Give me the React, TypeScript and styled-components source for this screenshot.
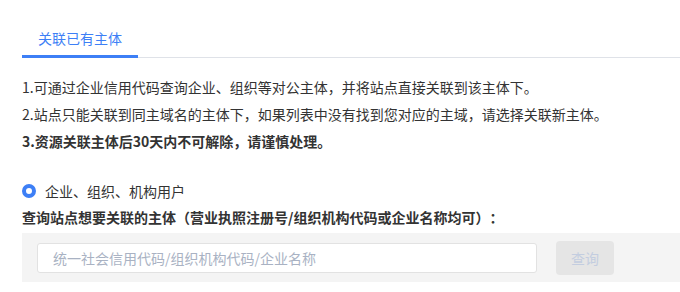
import React from "react";
import styled, { createGlobalStyle } from "styled-components";

const BLUE = "#3d7ff6";
const FONT = `"Noto Sans CJK SC", "Noto Sans", sans-serif`;

const NOTES = [
  { text: "1.可通过企业信用代码查询企业、组织等对公主体，并将站点直接关联到该主体下。" },
  { text: "2.站点只能关联到同主域名的主体下，如果列表中没有找到您对应的主域，请选择关联新主体。" },
  { text: "3.资源关联主体后30天内不可解除，请谨慎处理。", strong: true },
];

function App() {
  return (
    <>
      <GlobalStyle />
      <Page>
        <TabBar>
          <Tab $active>关联已有主体</Tab>
        </TabBar>

        <Notes>
          {NOTES.map((n) => (
            <Note key={n.text} $strong={n.strong}>
              {n.text}
            </Note>
          ))}
        </Notes>

        <RadioRow>
          <RadioDot />
          企业、组织、机构用户
        </RadioRow>

        <FieldLabel>
          查询站点想要关联的主体（营业执照注册号/组织机构代码或企业名称均可）：
        </FieldLabel>

        <SearchBox>
          <SearchInput placeholder="统一社会信用代码/组织机构代码/企业名称" />
          <SearchButton disabled>查询</SearchButton>
        </SearchBox>
      </Page>
    </>
  );
}

export default App;

const GlobalStyle = createGlobalStyle`
  html, body {
    margin: 0;
    padding: 0;
    background: #fff;
  }
  body {
    font-family: ${FONT};
    color: #333;
    text-spacing-trim: space-all;
  }
`;

const Page = styled.div`
  width: 680px;
  height: 292px;
  padding-left: 22px;
  box-sizing: border-box;
  overflow: hidden;
`;

const TabBar = styled.div`
  display: flex;
  padding-top: 28px;
  border-bottom: 1px solid #dfe2e8;
  margin-right: -40px;
`;

const Tab = styled.div<{ $active?: boolean }>`
  width: 116px;
  text-align: center;
  font-size: 14px;
  line-height: 20px;
  padding-bottom: 7px;
  margin-bottom: -1px;
  color: ${(p) => (p.$active ? BLUE : "#666")};
  border-bottom: 3px solid ${(p) => (p.$active ? BLUE : "transparent")};
`;

const Notes = styled.div`
  margin-top: 16px;
`;

const Note = styled.div<{ $strong?: boolean }>`
  font-size: 14px;
  line-height: 27px;
  white-space: nowrap;
  font-weight: ${(p) => (p.$strong ? 700 : 400)};
`;

const RadioRow = styled.label`
  display: flex;
  align-items: center;
  gap: 9px;
  margin-top: 26px;
  font-size: 14px;
  line-height: 20px;
`;

const RadioDot = styled.span`
  width: 14px;
  height: 14px;
  box-sizing: border-box;
  border-radius: 50%;
  border: 4px solid ${BLUE};
  background: #fff;
`;

const FieldLabel = styled.div`
  margin-top: 6px;
  font-size: 14px;
  line-height: 20px;
  font-weight: 700;
  white-space: nowrap;
`;

const SearchBox = styled.div`
  display: flex;
  align-items: center;
  gap: 19px;
  margin-top: 6px;
  margin-right: -40px;
  height: 49px;
  padding-left: 15px;
  background: #f4f4f4;
`;

const SearchInput = styled.input`
  width: 500px;
  height: 30px;
  box-sizing: border-box;
  padding: 0 15px;
  border: 1px solid #e2e2e2;
  border-radius: 3px;
  background: #fff;
  font-family: ${FONT};
  font-size: 14px;
  color: #333;
  outline: none;

  &::placeholder {
    color: #a9b2c3;
  }
`;

const SearchButton = styled.button`
  width: 58px;
  height: 34px;
  border: none;
  border-radius: 4px;
  background: #e5e5e5;
  color: #c3cde0;
  font-family: ${FONT};
  font-size: 14px;
  padding: 0;
`;
